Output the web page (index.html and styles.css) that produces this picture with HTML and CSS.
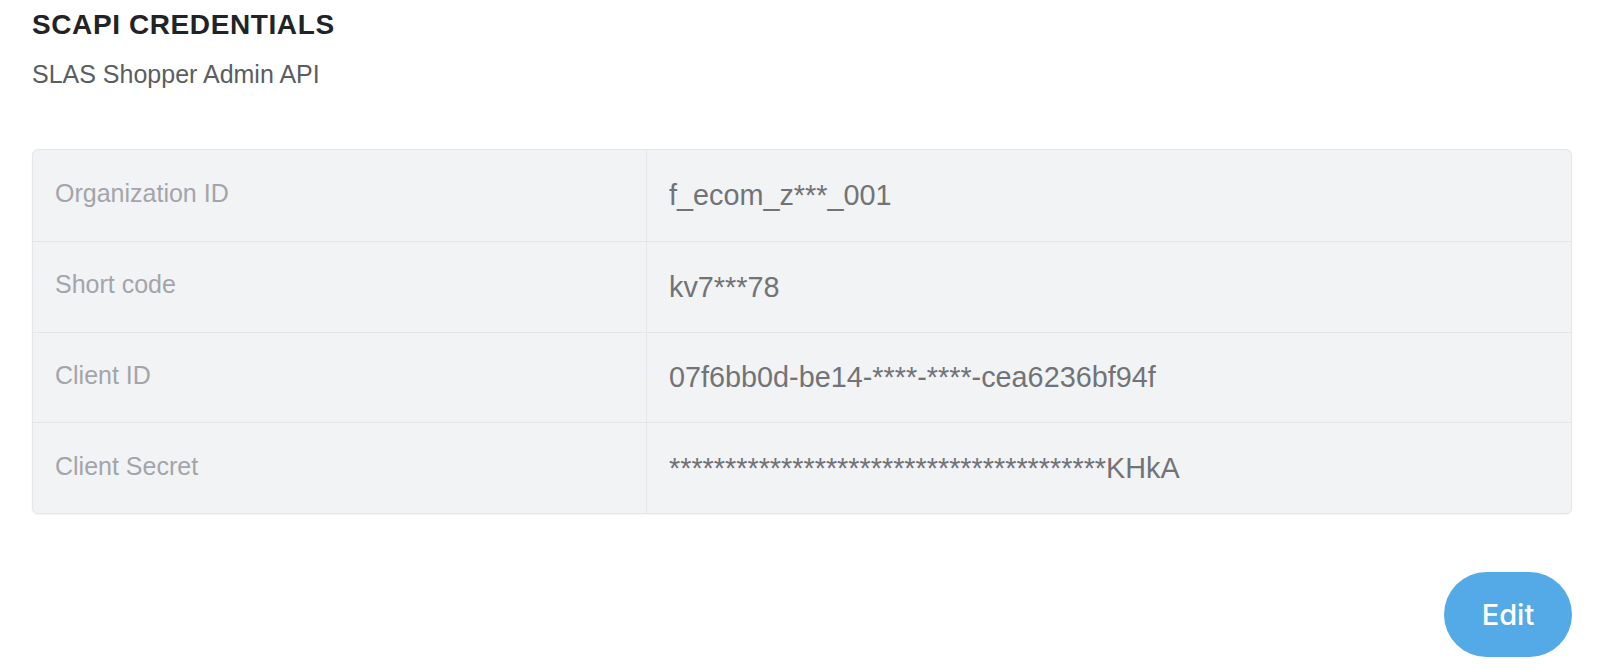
FILE: index.html
```html
<!DOCTYPE html>
<html lang="en">
<head>
<meta charset="utf-8">
<title>SCAPI Credentials</title>
<link rel="stylesheet" href="styles.css">
</head>
<body>
<main class="page">
  <header class="header">
    <h1 class="title">SCAPI CREDENTIALS</h1>
    <p class="subtitle">SLAS Shopper Admin API</p>
  </header>
  <section class="table">
    <div class="row">
      <div class="cell label">Organization ID</div>
      <div class="cell value">f_ecom_z***_001</div>
    </div>
    <div class="row">
      <div class="cell label">Short code</div>
      <div class="cell value">kv7***78</div>
    </div>
    <div class="row">
      <div class="cell label">Client ID</div>
      <div class="cell value">07f6bb0d-be14-****-****-cea6236bf94f</div>
    </div>
    <div class="row">
      <div class="cell label">Client Secret</div>
      <div class="cell value">***************************************KHkA</div>
    </div>
  </section>
  <div class="actions">
    <button class="edit-btn" type="button">Edit</button>
  </div>
</main>
</body>
</html>
```

FILE: styles.css
```css
* { box-sizing: border-box; }

html, body {
  margin: 0;
  padding: 0;
  background: #ffffff;
}

body {
  font-family: "Liberation Sans", Arial, Helvetica, sans-serif;
}

.page {
  padding: 8px 26px 0 32px;
  width: 1598px;
}

.header {
  display: flex;
  flex-direction: column;
  gap: 17px;
}

.title {
  margin: 0;
  font-size: 28px;
  line-height: 34px;
  font-weight: 700;
  letter-spacing: 0.6px;
  color: #222326;
}

.subtitle {
  margin: 0;
  font-size: 25px;
  line-height: 30px;
  color: #5b5d61;
}

.table {
  margin-top: 60px;
  background: #f2f3f5;
  border: 1px solid #e4e6e9;
  border-radius: 6px;
  box-shadow: 0 1px 2px rgba(0, 0, 0, 0.05);
  overflow: hidden;
}

.row {
  display: grid;
  grid-template-columns: 614px 1fr;
  height: 90.75px;
  border-top: 1px solid #e4e6e9;
}

.row:first-child { border-top: none; }

.cell {
  display: flex;
  align-items: center;
  padding-left: 22px;
}

.label {
  font-size: 25px;
  color: #a3a5aa;
  border-right: 1px solid #e4e6e9;
  padding-bottom: 4px;
}

.value {
  font-size: 28.8px;
  color: #727377;
  padding-top: 1px;
}

.actions {
  display: flex;
  justify-content: flex-end;
  margin-top: 58px;
}

.edit-btn {
  width: 128px;
  height: 85px;
  border: none;
  border-radius: 43px;
  background: #53aae6;
  color: #ffffff;
  font-family: Inter, "Open Sans", sans-serif;
  font-weight: 500;
  font-size: 29px;
  padding: 0;
  cursor: pointer;
}
```
